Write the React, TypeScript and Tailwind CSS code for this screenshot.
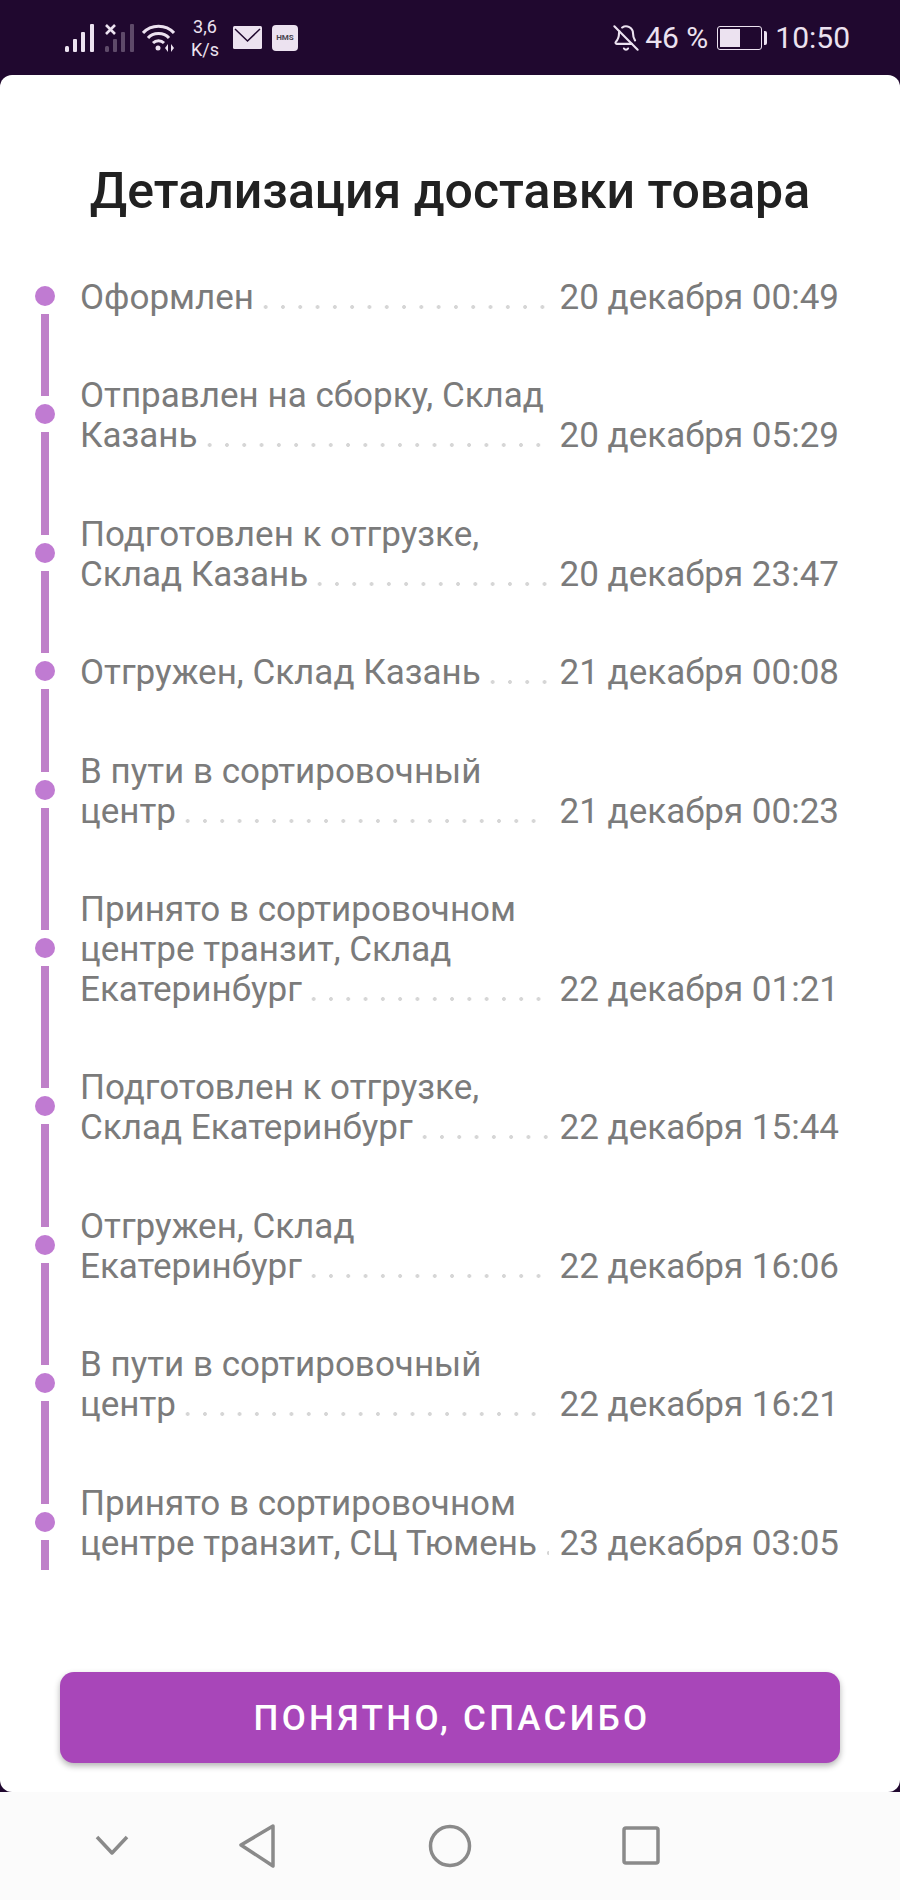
import React from 'react';
import { BellOff } from 'lucide-react';

type Step = { lines: string[]; date: string };

const STEPS: Step[] = [
  { lines: ['Оформлен'], date: '20 декабря 00:49' },
  { lines: ['Отправлен на сборку, Склад', 'Казань'], date: '20 декабря 05:29' },
  { lines: ['Подготовлен к отгрузке,', 'Склад Казань'], date: '20 декабря 23:47' },
  { lines: ['Отгружен, Склад Казань'], date: '21 декабря 00:08' },
  { lines: ['В пути в сортировочный', 'центр'], date: '21 декабря 00:23' },
  { lines: ['Принято в сортировочном', 'центре транзит, Склад', 'Екатеринбург'], date: '22 декабря 01:21' },
  { lines: ['Подготовлен к отгрузке,', 'Склад Екатеринбург'], date: '22 декабря 15:44' },
  { lines: ['Отгружен, Склад', 'Екатеринбург'], date: '22 декабря 16:06' },
  { lines: ['В пути в сортировочный', 'центр'], date: '22 декабря 16:21' },
  { lines: ['Принято в сортировочном', 'центре транзит, СЦ Тюмень'], date: '23 декабря 03:05' },
];

const LINE_HEIGHT = 40;
const ROW_GAP = 58.4;

const SignalIcon = ({ dim }: { dim?: boolean }) => (
  <svg width="30" height="28" viewBox="0 0 30 28" fill="#ece2f0" opacity={dim ? 0.3 : 1}>
    <rect x="0" y="22" width="4" height="6" rx="1.5" />
    <rect x="8" y="15" width="4" height="13" rx="1" />
    <rect x="16" y="8" width="4" height="20" rx="1" />
    <rect x="25" y="0" width="4" height="28" rx="1" />
  </svg>
);

const StatusBar = () => (
  <div className="flex h-[75px] items-center justify-between bg-[#20082f] pl-[65px] pr-[50px] text-[#ece2f0]">
    <div className="flex items-center">
      <SignalIcon />
      <div className="relative ml-[10px]">
        <SignalIcon dim />
        <svg className="absolute left-0 top-0" width="11" height="11" viewBox="0 0 11 11" stroke="#ece2f0" strokeWidth="2.6">
          <path d="M1 1 L10 10 M10 1 L1 10" />
        </svg>
      </div>
      <svg className="ml-[7px]" width="33" height="28" viewBox="0 0 33 28" fill="none" stroke="#ece2f0" strokeWidth="3">
        <path d="M1 9 C9 0 24 0 32 9" />
        <path d="M6 14 C11 8 22 8 27 14" />
        <path d="M11 19 C14 16 19 16 22 19" />
        <circle cx="16" cy="24" r="2.5" fill="#ece2f0" stroke="none" />
        <path d="M26 20 L23 24 L26 28 Z" fill="#ece2f0" stroke="none" />
        <path d="M29 20 L32 24 L29 28 Z" fill="#ece2f0" stroke="none" />
      </svg>
      <div className="ml-[14px] w-[32px] text-center text-[18px] leading-[23px]">
        <div>3,6</div>
        <div>K/s</div>
      </div>
      <svg className="ml-[12px]" width="29" height="23" viewBox="0 0 29 23">
        <rect width="29" height="23" rx="1.5" fill="#ece2f0" />
        <path d="M2 3 L14.5 15 L27 3" fill="none" stroke="#20082f" strokeWidth="1.5" />
      </svg>
      <div className="ml-[10px] flex h-[26px] w-[26px] items-center justify-center rounded-[4px] bg-[#ece2f0] text-[8px] font-bold text-[#4a4550]">
        HMS
      </div>
    </div>
    <div className="flex items-center">
      <BellOff size={28} strokeWidth={1.8} />
      <span className="ml-[5px] text-[30px] leading-none">46 %</span>
      <div className="ml-[9px] flex h-[24px] w-[45px] rounded-[3px] border border-[#ece2f0] p-[2px]">
        <div className="w-[20px] bg-[#ece2f0]" />
      </div>
      <div className="ml-[2px] h-[14px] w-[3px] rounded-r-[2px] bg-[#ece2f0]" />
      <span className="ml-[8px] text-[30px] leading-none">10:50</span>
    </div>
  </div>
);

const Timeline = () => (
  <div className="mt-[8px] flex w-[20px] shrink-0 flex-col items-center">
    {STEPS.map((step, i) => {
      const next = STEPS[i + 1];
      const pitch = next
        ? ((step.lines.length + next.lines.length) * LINE_HEIGHT) / 2 + ROW_GAP
        : 68;
      return (
        <React.Fragment key={i}>
          <div className="h-[20px] w-[20px] shrink-0 rounded-full bg-[#c07bd2]" />
          <div className="my-[8px] w-[8px] shrink-0 bg-[#bf80c9]" style={{ height: pitch - 36 }} />
        </React.Fragment>
      );
    })}
  </div>
);

const Row = ({ step }: { step: Step }) => {
  const last = step.lines[step.lines.length - 1];
  return (
    <div>
      {step.lines.slice(0, -1).map((line) => (
        <div key={line}>{line}</div>
      ))}
      <div className="flex items-baseline">
        <span className="shrink-0 whitespace-nowrap">{last}</span>
        {/* leader dots sit on the text baseline */}
        <span className="ml-[3px] h-[4px] min-w-0 flex-1 bg-[radial-gradient(circle,#d6d6d6_1.6px,transparent_2.2px)] bg-[length:17.3px_4px] bg-repeat-x" />
        <span className="ml-[11px] shrink-0 whitespace-nowrap">{step.date}</span>
      </div>
    </div>
  );
};

const NavBar = () => (
  <div className="flex h-[108px] justify-center bg-[#fbfbfb]">
    <svg width="900" height="108" viewBox="0 0 900 108" fill="none" stroke="#8a8a8a" strokeWidth="3.5" strokeLinejoin="round">
      <path d="M97 45 L112 61 L127 45" />
      <path d="M273 34 L241 53 L273 74 Z" />
      <circle cx="450" cy="54" r="19.5" />
      <rect x="624" y="36" width="34" height="35" rx="2" />
    </svg>
  </div>
);

export default function App() {
  return (
    <div className="flex h-[1900px] w-[900px] flex-col bg-[#20082f] font-['Roboto',sans-serif]">
      <StatusBar />
      <div className="flex h-[1717px] flex-col rounded-[12px] bg-white">
        <h1 className="mt-[94px] text-center text-[50px] font-medium leading-[44px] text-[#212121]">
          Детализация доставки товара
        </h1>
        <div className="mt-[65px] flex h-[1292px] overflow-hidden pl-[35px] pr-[61px]">
          <Timeline />
          <div className="ml-[25px] flex min-w-0 flex-1 flex-col gap-[58.4px] text-[35px] leading-[40px] text-[#7b7b7b]">
            {STEPS.map((step) => (
              <Row key={step.date} step={step} />
            ))}
          </div>
        </div>
        <div className="mt-[102px] px-[60px]">
          <button className="flex h-[91px] w-full items-center justify-center rounded-[14px] bg-[#a846b9] pl-[4px] pt-[4px] text-[35px] font-medium tracking-[3.3px] text-white shadow-[0_3px_6px_rgba(0,0,0,0.3)]">
            ПОНЯТНО, СПАСИБО
          </button>
        </div>
      </div>
      <NavBar />
    </div>
  );
}
